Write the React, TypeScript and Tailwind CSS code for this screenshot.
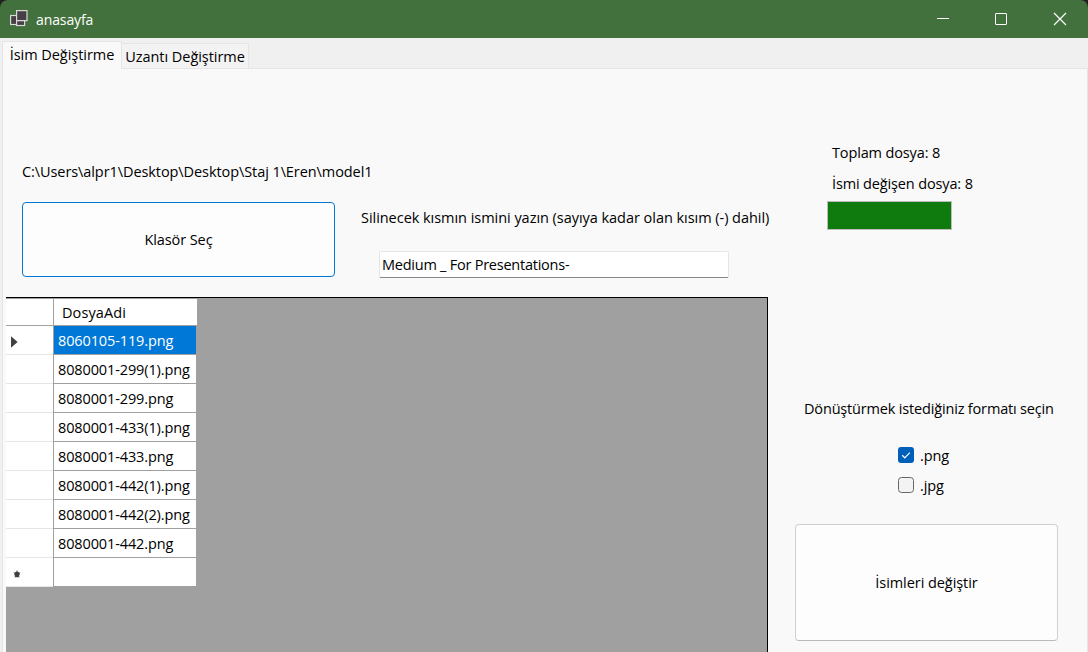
import React, { useState } from "react";

const files = [
  "8060105-119.png",
  "8080001-299(1).png",
  "8080001-299.png",
  "8080001-433(1).png",
  "8080001-433.png",
  "8080001-442(1).png",
  "8080001-442(2).png",
  "8080001-442.png",
];

function TitleBar() {
  return (
    <header className="flex h-[38px] shrink-0 items-center rounded-t-lg bg-[#42713d] text-white">
      <svg className="ml-[10px]" width="19" height="18" viewBox="0 0 19 18" fill="#454045" stroke="#d8d8d8" strokeWidth="1.2">
        <rect x="0.6" y="5.5" width="6" height="9" />
        <rect x="6.6" y="10.5" width="8" height="5" />
        <rect x="6.6" y="0.6" width="10.4" height="10" />
      </svg>
      <h1 className="ml-[7px] pt-[1px] text-[14px] tracking-[-0.1px]">anasayfa</h1>
      <div className="ml-auto flex items-center">
        <svg width="14" height="14" viewBox="0 0 14 14" stroke="white" fill="none"><path d="M1 6.5h12" /></svg>
        <svg className="ml-[44px]" width="14" height="14" viewBox="0 0 14 14" stroke="white" fill="none"><rect x="1.5" y="1.5" width="11" height="11" rx="0.5" /></svg>
        <svg className="mr-[21px] ml-[45px]" width="14" height="14" viewBox="0 0 14 14" stroke="white" strokeWidth="1.2" fill="none"><path d="M1 1l12 12M13 1L1 13" /></svg>
      </div>
    </header>
  );
}

function Tabs() {
  return (
    <nav className="flex h-[31px] shrink-0 items-end bg-[#f0f0f0] pl-[2px]">
      <button className="h-[28px] w-[120px] border border-b-0 border-[#e5e5e5] bg-[#f9f9f9] pb-[1px] tracking-[-0.05px]">İsim Değiştirme</button>
      <button className="h-[26px] w-[127px] border border-l-0 border-[#e5e5e5] bg-[#f3f3f3] pt-[1px] tracking-[-0.05px]">Uzantı Değiştirme</button>
      <div className="h-px grow bg-[#e5e5e5]" />
    </nav>
  );
}

function FileTable() {
  return (
    <div className="grow border-t border-r border-black bg-[#a0a0a0] pt-px">
      <div className="flex">
        <div className="w-[48px] border-r border-[#a0a0a0] bg-white">
          <div className="h-[27px] border-b border-[#a0a0a0]" />
          {files.map((f, i) => (
            <div key={f} className="flex h-[29px] items-center border-b border-[#e5e5e5] pt-[3px] pl-[5px]">
              {i === 0 && (
                <svg width="7" height="12" viewBox="0 0 7 12" fill="#404040"><path d="M0 0.3L6.6 6L0 11.7z" /></svg>
              )}
            </div>
          ))}
          <div className="flex h-[29px] items-center border-b border-[#e5e5e5] pt-[3px] pl-[7px]">
            <svg width="8" height="8" viewBox="0 0 8 8" fill="#404040" stroke="#404040"><circle cx="4" cy="4.2" r="2.2" /><path strokeWidth="0.9" d="M4 0.6v3M0.8 2.8l3 1.2M7.2 2.8L4.2 4M1.8 7.2L4 4l2.2 3.2" /></svg>
          </div>
        </div>
        <div className="w-[143px]">
          <div className="flex h-[27px] items-center border-b border-[#a0a0a0] bg-white pt-[2px] pl-[8px] tracking-[0.1px]">DosyaAdi</div>
          {files.map((f, i) => (
            <div
              key={f}
              className={
                i === 0
                  ? "flex h-[29px] w-[142px] items-center border-b border-[#a0a0a0] bg-[#0078d7] pt-[2px] pl-[4px] tracking-[-0.12px] text-white"
                  : "flex h-[29px] w-[142px] items-center border-b border-[#a0a0a0] bg-white pt-[2px] pl-[4px] tracking-[-0.12px]"
              }
            >
              {f}
            </div>
          ))}
          <div className="h-[28px] w-[142px] bg-white" />
        </div>
      </div>
    </div>
  );
}

function Check({ label, checked, onChange }: { label: string; checked: boolean; onChange: () => void }) {
  return (
    <button className="flex h-[30px] items-center" onClick={onChange}>
      {checked ? (
        <svg width="16" height="16" viewBox="0 0 16 16" fill="none"><rect width="16" height="16" rx="3" fill="#005fb8" /><path d="M4.2 8.3L6.8 10.8L11.8 5.7" stroke="white" strokeWidth="1.2" /></svg>
      ) : (
        <svg width="16" height="16" viewBox="0 0 16 16"><rect x="0.5" y="0.5" width="15" height="15" rx="3" fill="#f3f3f3" stroke="#666" /></svg>
      )}
      <span className="ml-[6px] pt-[1px] tracking-[-0.1px]">{label}</span>
    </button>
  );
}

export default function App() {
  const [png, setPng] = useState(true);
  const [jpg, setJpg] = useState(false);
  const [prefix, setPrefix] = useState("Medium _ For Presentations-");
  return (
    <div className="h-[652px] w-[1088px] overflow-hidden bg-[#202020]">
      <div className="flex h-full flex-col whitespace-nowrap font-['Open_Sans','Noto_Sans',sans-serif] text-[14.5px] leading-[20px] text-black">
        <TitleBar />
        <Tabs />
        <div className="flex grow bg-[#f0f0f0] pl-[2px]">
          <main className="flex grow border-x border-[#e5e5e5] bg-[#f9f9f9] pl-[3px]">
            <section className="flex w-[762px] flex-col">
              <p className="mt-[93px] ml-[16px] tracking-[-0.08px]">C:\Users\alpr1\Desktop\Desktop\Staj 1\Eren\model1</p>
              <div className="mt-[20px] mb-[20px] flex h-[75px]">
                <button className="ml-[16px] w-[313px] shrink-0 rounded-[4px] border border-[#0078d4] bg-[#fdfdfd] tracking-[-0.1px]">Klasör Seç</button>
                <div className="ml-[26px] pt-[6px]">
                  <label htmlFor="prefix" className="block tracking-[-0.04px]">Silinecek kısmın ismini yazın (sayıya kadar olan kısım (-) dahil)</label>
                  <input id="prefix" value={prefix} onChange={(e) => setPrefix(e.target.value)} className="mt-[23px] ml-[18px] block h-[27px] w-[350px] rounded-[2px] border border-[#e5e5e5] border-b-[#868686] bg-white pl-[2px] tracking-[-0.24px] outline-none" />
                </div>
              </div>
              <FileTable />
            </section>
            <section className="flex flex-col">
              <p className="mt-[74px] ml-[64px] tracking-[-0.14px]">Toplam dosya: 8</p>
              <p className="mt-[11px] ml-[64px] tracking-[-0.14px]">İsmi değişen dosya: 8</p>
              <div className="mt-[7px] ml-[59px] h-[29px] w-[125px] border border-[#bcbcbc] bg-[#0f7b0f]" />
              <p className="mt-[169px] ml-[36px] tracking-[-0.17px]">Dönüştürmek istediğiniz formatı seçin</p>
              <div className="mt-[21px] ml-[130px] flex flex-col items-start">
                <Check label=".png" checked={png} onChange={() => setPng(!png)} />
                <Check label=".jpg" checked={jpg} onChange={() => setJpg(!jpg)} />
              </div>
              <button className="mt-[24px] ml-[27px] h-[117px] w-[263px] rounded-[4px] border border-[#d0d0d0] border-b-[#bababa] bg-[#fdfdfd] tracking-[-0.06px]">İsimleri değiştir</button>
            </section>
          </main>
        </div>
      </div>
    </div>
  );
}
